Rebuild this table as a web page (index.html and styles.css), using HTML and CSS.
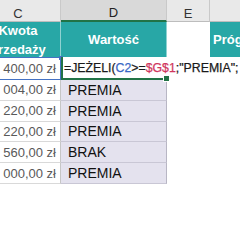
FILE: index.html
```html
<!DOCTYPE html>
<html lang="pl">
<head>
<meta charset="utf-8">
<link rel="stylesheet" href="styles.css">
</head>
<body>
<div class="sheet">
  <div class="colhead">C</div>
  <div class="colhead sel">D</div>
  <div class="colhead">E</div>
  <div class="colhead"></div>

  <div class="th">Kwota<br>przedaży</div>
  <div class="th">Wartość</div>
  <div class="blank"></div>
  <div class="th th-left">Próg</div>

  <div class="num ref">400,00 zł</div>
  <div class="active"><span class="formula">=JEŻELI(<span class="r1">C2</span>&gt;=<span class="r2">$G$1</span>;"PREMIA";</span></div>
  <div class="empty"></div>
  <div class="empty"></div>

  <div class="num">004,00 zł</div>
  <div class="val">PREMIA</div>
  <div class="empty"></div>
  <div class="empty"></div>

  <div class="num">220,00 zł</div>
  <div class="val">PREMIA</div>
  <div class="empty"></div>
  <div class="empty"></div>

  <div class="num">220,00 zł</div>
  <div class="val">PREMIA</div>
  <div class="empty"></div>
  <div class="empty"></div>

  <div class="num">560,00 zł</div>
  <div class="val">BRAK</div>
  <div class="empty"></div>
  <div class="empty"></div>

  <div class="num">000,00 zł</div>
  <div class="val">PREMIA</div>
  <div class="empty"></div>
  <div class="empty"></div>
</div>
</body>
</html>
```

FILE: styles.css
```css
* { box-sizing: border-box; }
html, body {
  margin: 0;
  padding: 0;
  width: 240px;
  height: 240px;
  overflow: hidden;
  background: #ffffff;
  font-family: "Liberation Sans", Arial, sans-serif;
}
.sheet {
  display: grid;
  grid-template-columns: 85px 106px 43px 100px;
  grid-template-rows: 22px 35px 23px repeat(5, 20.8px);
  margin-left: -24px;
}
.colhead {
  background: #e9e9e9;
  border-right: 1px solid #c9c9c9;
  border-bottom: 1px solid #bdbdbd;
  color: #333;
  font-size: 13px;
  display: flex;
  align-items: center;
  justify-content: center;
  padding-top: 5px;
}
.colhead.sel {
  background: #d9d9d9;
  border-bottom: 2px solid #217346;
  color: #222;
}
.th {
  background: #28a7a6;
  color: #fff;
  font-weight: bold;
  font-size: 13px;
  line-height: 19px;
  display: flex;
  align-items: center;
  justify-content: center;
  text-align: center;
  border-right: 1px solid #8fd2d1;
}
.th-left {
  justify-content: flex-start;
  padding-left: 3px;
  border-right: none;
}
.blank { background: #fff; }
.num {
  font-size: 13px;
  color: #595959;
  text-align: right;
  padding-right: 4px;
  display: flex;
  align-items: center;
  justify-content: flex-end;
  border-bottom: 1px solid #d9d9d9;
  border-right: 1px solid #c6c6c6;
  white-space: nowrap;
}
.ref {
  position: relative;
  border: 1px solid #4472c4;
  border-left: none;
}
.ref::after {
  content: "";
  position: absolute;
  right: -3px;
  top: -2px;
  width: 4px;
  height: 4px;
  background: #4472c4;
}
.active {
  position: relative;
  border-left: 2px solid #217346;
  border-bottom: 2px solid #217346;
  display: flex;
  align-items: center;
  padding-left: 1px;
  white-space: nowrap;
  overflow: visible;
  z-index: 2;
}
.active::after {
  content: "";
  position: absolute;
  right: -3px;
  bottom: -4px;
  width: 5px;
  height: 5px;
  background: #217346;
  border: 1px solid #fff;
}
.formula {
  font-size: 12.3px;
  color: #1a1a1a;
  -webkit-text-stroke: 0.25px currentColor;
}
.r1 { color: #3868c6; }
.r2 { color: #d0365e; }
.val {
  background: #e4e2ee;
  font-size: 14px;
  color: #111;
  display: flex;
  align-items: center;
  padding-left: 7px;
  border-bottom: 1px solid #c9c7d5;
  border-right: 1px solid #b8b6c4;
  white-space: nowrap;
}
.empty { background: transparent; }
```
